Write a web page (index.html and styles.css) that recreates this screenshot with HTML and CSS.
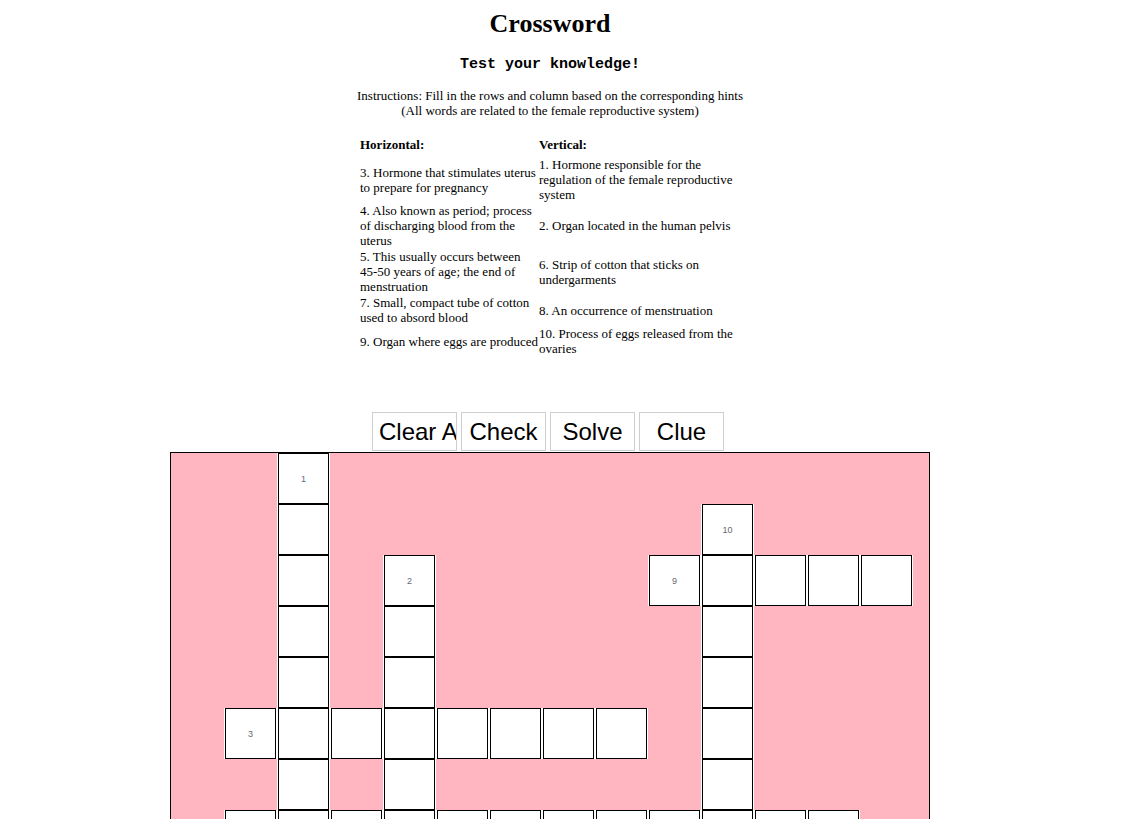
FILE: index.html
```html
<!DOCTYPE html>
<html lang="en">
<head>
<meta charset="utf-8">
<title>Crossword</title>
<link rel="stylesheet" href="styles.css">
</head>
<body>
<div class="page">
  <h1 class="title">Crossword</h1>
  <h3 class="subtitle">Test your knowledge!</h3>
  <p class="instructions">Instructions: Fill in the rows and column based on the corresponding hints<br>(All words are related to the female reproductive system)</p>

  <table class="hints">
    <thead>
      <tr><th class="hcol">Horizontal:</th><th class="vcol">Vertical:</th></tr>
    </thead>
    <tbody>
      <tr><td>3. Hormone that stimulates uterus to prepare for pregnancy</td><td>1. Hormone responsible for the regulation of the female reproductive system</td></tr>
      <tr><td>4. Also known as period; process of discharging blood from the uterus</td><td>2. Organ located in the human pelvis</td></tr>
      <tr><td>5. This usually occurs between 45-50 years of age; the end of menstruation</td><td>6. Strip of cotton that sticks on undergarments</td></tr>
      <tr><td>7. Small, compact tube of cotton used to absord blood</td><td>8. An occurrence of menstruation</td></tr>
      <tr><td>9. Organ where eggs are produced</td><td>10. Process of eggs released from the ovaries</td></tr>
    </tbody>
  </table>

  <div class="controls">
    <button class="btn btn-clip" type="button">Clear All</button>
    <button class="btn" type="button">Check</button>
    <button class="btn" type="button">Solve</button>
    <button class="btn" type="button">Clue</button>
  </div>

  <div class="board">
    <!-- row 0 -->
    <div></div><div></div><div class="cell">1</div><div></div><div></div><div></div><div></div><div></div><div></div><div></div><div></div><div></div><div></div><div></div>
    <!-- row 1 -->
    <div></div><div></div><div class="cell"></div><div></div><div></div><div></div><div></div><div></div><div></div><div></div><div class="cell">10</div><div></div><div></div><div></div>
    <!-- row 2 -->
    <div></div><div></div><div class="cell"></div><div></div><div class="cell">2</div><div></div><div></div><div></div><div></div><div class="cell">9</div><div class="cell"></div><div class="cell"></div><div class="cell"></div><div class="cell"></div>
    <!-- row 3 -->
    <div></div><div></div><div class="cell"></div><div></div><div class="cell"></div><div></div><div></div><div></div><div></div><div></div><div class="cell"></div><div></div><div></div><div></div>
    <!-- row 4 -->
    <div></div><div></div><div class="cell"></div><div></div><div class="cell"></div><div></div><div></div><div></div><div></div><div></div><div class="cell"></div><div></div><div></div><div></div>
    <!-- row 5 -->
    <div></div><div class="cell">3</div><div class="cell"></div><div class="cell"></div><div class="cell"></div><div class="cell"></div><div class="cell"></div><div class="cell"></div><div class="cell"></div><div></div><div class="cell"></div><div></div><div></div><div></div>
    <!-- row 6 -->
    <div></div><div></div><div class="cell"></div><div></div><div class="cell"></div><div></div><div></div><div></div><div></div><div></div><div class="cell"></div><div></div><div></div><div></div>
    <!-- row 7 -->
    <div></div><div class="cell">4</div><div class="cell"></div><div class="cell"></div><div class="cell"></div><div class="cell"></div><div class="cell"></div><div class="cell"></div><div class="cell"></div><div class="cell"></div><div class="cell"></div><div class="cell"></div><div class="cell"></div><div></div>
    <!-- row 8 -->
    <div></div><div></div><div class="cell"></div><div></div><div></div><div></div><div></div><div></div><div></div><div></div><div class="cell"></div><div></div><div></div><div></div>
    <!-- row 9 -->
    <div></div><div></div><div class="cell"></div><div></div><div></div><div></div><div></div><div></div><div></div><div></div><div class="cell"></div><div></div><div></div><div></div>
    <!-- row 10 -->
    <div></div><div></div><div class="cell"></div><div></div><div></div><div></div><div></div><div></div><div></div><div></div><div></div><div></div><div></div><div></div>
    <!-- row 11 -->
    <div></div><div></div><div class="cell"></div><div></div><div></div><div></div><div></div><div></div><div></div><div></div><div></div><div></div><div></div><div></div>
  </div>
</div>
</body>
</html>
```

FILE: styles.css
```css
html, body {
  margin: 0;
  padding: 0;
  background: #fff;
}

body {
  font-family: "Liberation Serif", "Times New Roman", serif;
  font-size: 13px;
  color: #000;
}

.page {
  width: 1100px;
  display: flex;
  flex-direction: column;
  align-items: center;
  padding-bottom: 40px;
}

.title {
  margin: 9px 0 0;
  font-size: 26px;
  line-height: 30px;
  font-weight: bold;
}

.subtitle {
  margin: 17px 0 0;
  font-family: "Liberation Mono", "Courier New", monospace;
  font-size: 15px;
  line-height: 18px;
  font-weight: bold;
}

.instructions {
  margin: 14px 0 0;
  line-height: 15px;
  text-align: center;
}

.hints {
  margin-top: 19px;
  border-collapse: separate;
  border-spacing: 0;
  table-layout: fixed;
  width: 380px;
  line-height: 15px;
}

.hints th {
  text-align: left;
  font-weight: bold;
  padding: 0 0 5px;
}

.hints .hcol {
  width: 179px;
}

.hints .vcol {
  width: 201px;
}

.hints td {
  padding: 0 0 1px;
  vertical-align: middle;
  text-align: left;
}

.controls {
  margin: 55px 4px 0 0;
  display: flex;
  gap: 4px;
}

.btn {
  width: 85px;
  height: 39px;
  padding: 0 6px;
  box-sizing: border-box;
  background: #fff;
  border: 1px solid #cfcfcf;
  border-radius: 0;
  font-family: "Liberation Sans", Arial, sans-serif;
  font-size: 24px;
  color: #000;
  white-space: nowrap;
  overflow: hidden;
  text-align: center;
}

.btn-clip {
  text-align: left;
}

.board {
  margin-top: 1px;
  width: 758px;
  border: 1px solid #000;
  background: #ffb6c1;
  display: grid;
  grid-template-columns: repeat(14, 53px);
  grid-auto-rows: 51px;
  align-content: start;
}

.cell {
  margin: 0 1px;
  box-sizing: border-box;
  border: 1px solid #000;
  background: #fff;
  box-shadow: 1px 0 0 #fff, -1px 0 0 #fff;
  display: flex;
  align-items: center;
  justify-content: center;
  font-family: "Liberation Sans", Arial, sans-serif;
  font-size: 9px;
  color: #5f6873;
}
```
